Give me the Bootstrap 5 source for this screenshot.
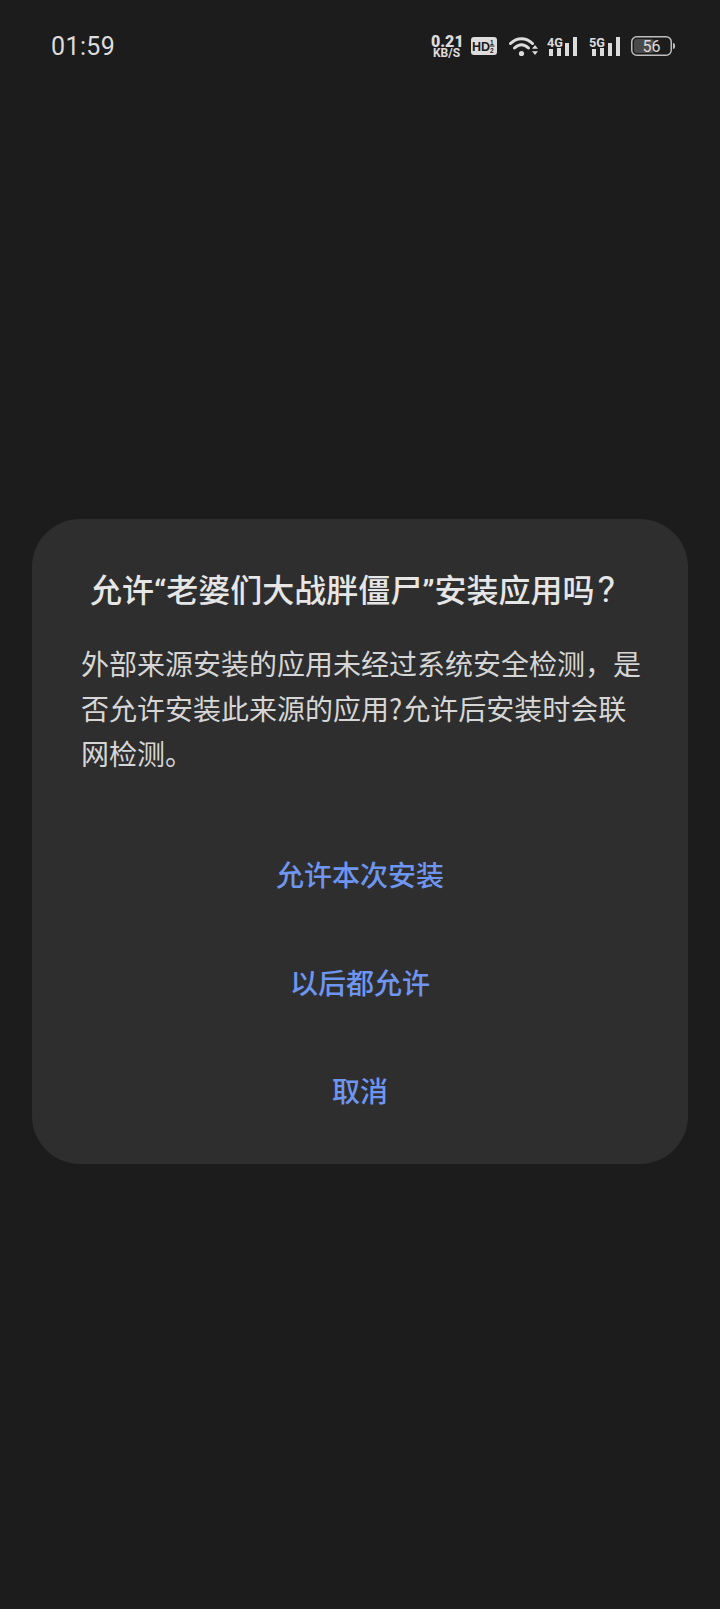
<!DOCTYPE html>
<html lang="zh-CN">
<head>
    <meta charset="UTF-8">
    <meta name="viewport" content="width=device-width, initial-scale=1">
    <title>安装应用</title>
    <link href="https://cdn.jsdelivr.net/npm/bootstrap@5.3.0/dist/css/bootstrap.min.css" rel="stylesheet">
    <style>
        body {
            background-color: #1c1c1c;
            font-family: "Noto Sans CJK SC", "Noto Sans", sans-serif;
            height: 1609px;
            overflow: hidden;
        }
        .status-bar {
            height: 92px;
            padding: 35px 45px 0 51px;
            color: #dcdcdc;
        }
        .status-time {
            font-family: Roboto, sans-serif;
            font-size: 25px;
            line-height: 24px;
            letter-spacing: .4px;
        }
        .net-speed {
            font-family: Roboto, sans-serif;
            font-weight: 700;
            text-align: center;
            width: 31px;
            margin-right: 9px;
        }
        .net-speed b { display: block; font-size: 16px; line-height: 13px; }
        .net-speed span { display: block; font-size: 12px; line-height: 11px; }
        .status-icons svg { display: block; flex: none; }
        .dialog-box {
            width: 656px;
            height: 645px;
            margin: 427px auto 0;
            padding-top: 49px;
            background-color: #2e2e2e;
            border-radius: 48px;
        }
        .dialog-title {
            font-family: Roboto, "Noto Sans CJK SC", sans-serif;
            font-size: 32px;
            font-weight: 500;
            line-height: 46px;
            color: #e6e6e6;
            padding-right: 15px;
            margin: 0 0 27px;
        }
        .title-mark { margin-left: 3px; font-size: 37px; font-weight: 400; line-height: 1; }
        .dialog-text {
            font-size: 28px;
            line-height: 45px;
            color: #d6d6d6;
            padding: 0 46px 0 49px;
            margin: 0 0 44px;
        }
        .dialog-btn {
            display: block;
            width: 100%;
            height: 108px;
            font-size: 28px;
            font-weight: 500;
            color: #6e96f0;
            border: 0;
            padding: 0;
            background: none;
        }
    </style>
</head>
<body>
    <div class="status-bar d-flex justify-content-between align-items-start">
        <div class="status-time">01:59</div>
        <div class="status-icons d-flex align-items-start">
            <div class="net-speed"><b>0.21</b><span>KB/S</span></div>
            <svg width="26" height="19" viewBox="0 0 26 19" style="margin-top:2px;margin-right:12px">
                <rect width="26" height="18" rx="3" fill="#dcdcdc"/>
                <text x="1" y="13.500" font-family="Liberation Sans" font-weight="700" font-size="12.500" fill="#1c1c1c">HD</text>
                <text x="19" y="7.500" font-family="Liberation Sans" font-weight="700" font-size="6.500" fill="#1c1c1c">1</text>
                <rect x="18.500" y="8.500" width="5" height="1" fill="#1c1c1c"/>
                <text x="19" y="15.500" font-family="Liberation Sans" font-weight="700" font-size="6.500" fill="#1c1c1c">2</text>
            </svg>
            <svg width="29" height="21" viewBox="0 0 29 21" style="margin-top:1px;margin-right:9px" fill="none" stroke="#dcdcdc" stroke-width="3" stroke-linecap="round">
                <path d="M1.500 7.500C8 1 17 1 23.500 7.500"/>
                <path d="M5.500 12C10 7.800 15 7.800 19.500 12"/>
                <circle cx="12.500" cy="17.500" r="2.600" fill="#dcdcdc" stroke="none"/>
                <path d="M23 12.800h6l-3-3.800zM23 15.200h6l-3 3.800z" fill="#dcdcdc" stroke="none"/>
            </svg>
            <svg width="30" height="20" viewBox="0 0 30 20" style="margin-top:1px;margin-right:12px">
                <text x="0" y="11" font-family="Roboto" font-weight="700" font-size="13" textLength="16" lengthAdjust="spacingAndGlyphs" fill="#dcdcdc">4G</text>
                <rect x="2" y="13" width="4" height="7" fill="#dcdcdc"/>
                <rect x="10" y="12" width="4" height="8" fill="#dcdcdc"/>
                <rect x="18" y="7" width="4" height="13" fill="#dcdcdc"/>
                <rect x="26" y="1" width="4" height="19" fill="#dcdcdc"/>
            </svg>
            <svg width="31" height="20" viewBox="0 0 31 20" style="margin-top:1px;margin-right:11px">
                <text x="0" y="11" font-family="Roboto" font-weight="700" font-size="13" textLength="16" lengthAdjust="spacingAndGlyphs" fill="#dcdcdc">5G</text>
                <rect x="3" y="13" width="4" height="7" fill="#dcdcdc"/>
                <rect x="11" y="12" width="4" height="8" fill="#dcdcdc"/>
                <rect x="19" y="7" width="4" height="13" fill="#dcdcdc"/>
                <rect x="27" y="1" width="4" height="19" fill="#dcdcdc"/>
            </svg>
            <svg width="44" height="20" viewBox="0 0 44 20" style="margin-top:1px">
                <rect x=".75" y=".75" width="39.500" height="18.500" rx="5" fill="none" stroke="#bdbdbd" stroke-width="1.500"/>
                <rect x="3" y="3" width="20" height="14" rx="3" fill="#4a4a4a"/>
                <path d="M42 7c1.200 0 2 .8 2 2v2c0 1.200-.8 2-2 2z" fill="#bdbdbd"/>
                <text x="20.500" y="16" text-anchor="middle" font-family="Roboto" font-size="16" fill="#dcdcdc">56</text>
            </svg>
        </div>
    </div>

    <div class="dialog-box">
        <h1 class="dialog-title text-center">允许“老婆们大战胖僵尸”安装应用吗<span class="title-mark">?</span></h1>
        <p class="dialog-text">外部来源安装的应用未经过系统安全检测，是否允许安装此来源的应用?允许后安装时会联网检测。</p>
        <button type="button" class="dialog-btn">允许本次安装</button>
        <button type="button" class="dialog-btn">以后都允许</button>
        <button type="button" class="dialog-btn">取消</button>
    </div>

    <script src="https://cdn.jsdelivr.net/npm/bootstrap@5.3.0/dist/js/bootstrap.bundle.min.js"></script>
</body>
</html>
